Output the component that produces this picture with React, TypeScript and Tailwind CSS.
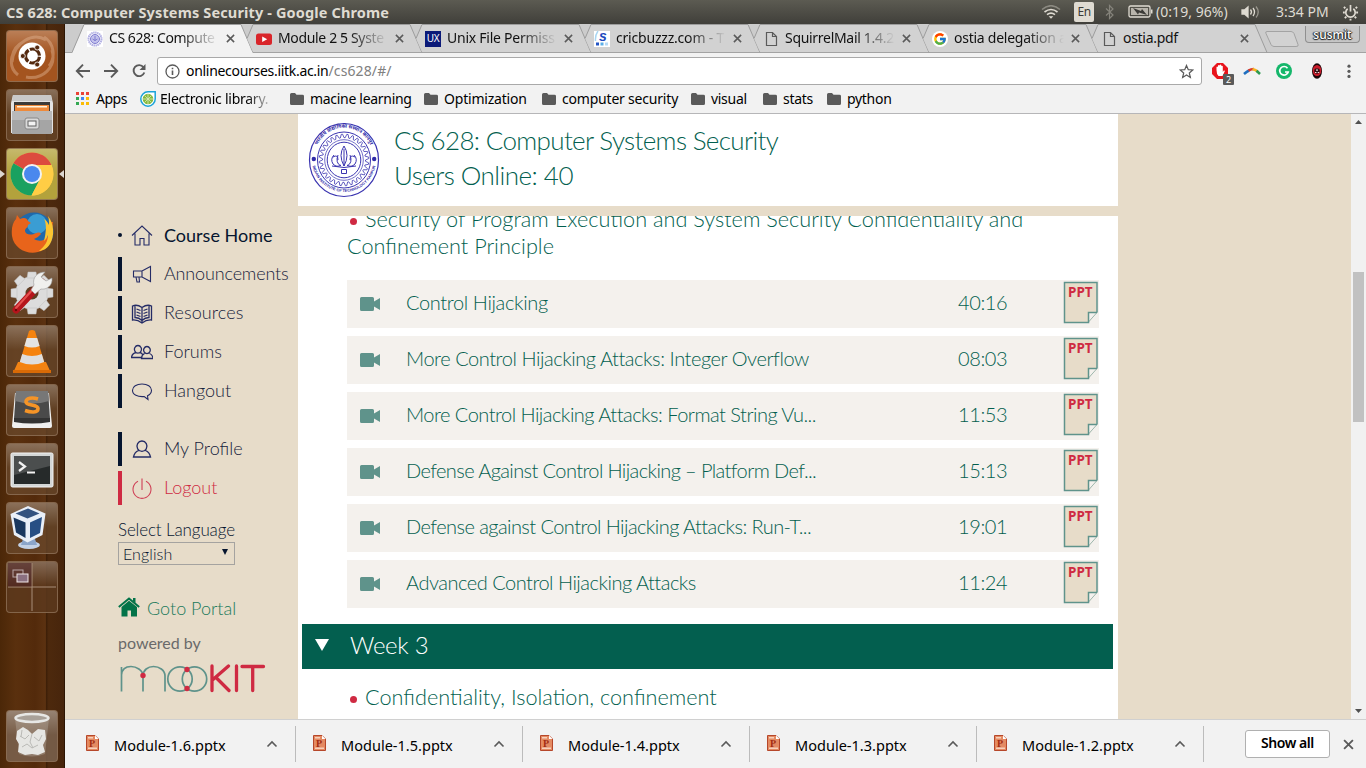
import React from "react";
import { FcGoogle } from "react-icons/fc";

const Tile = ({ children, bg = "bg-[#6b4a2e]/70" }: { children: React.ReactNode; bg?: string }) => (
  <div className={`relative flex h-[52px] w-[52px] shrink-0 items-center justify-center overflow-hidden rounded-[4px] border border-[#8d7058]/80 ${bg}`}>
    <div className="absolute inset-x-0 top-0 h-6 bg-gradient-to-b from-white/25 to-transparent" />
    <svg viewBox="0 0 48 48" className="relative h-12 w-12">{children}</svg>
  </div>
);

const Launcher = () => (
  <aside className="relative flex w-[65px] shrink-0 flex-col items-start gap-[7px] border-r border-[#2c1503] bg-[linear-gradient(90deg,#4b2708_0%,#5a300e_25%,#532a0b_55%,#5c3211_71%,#3c1e07_72%,#4d290d_76%,#47250c_100%)] pl-[6px] pt-[6px]">
    <Tile bg="bg-[#a4541f]">
      <g fill="none" stroke="#e0b493" strokeWidth="3" opacity=".45">
        <path d="M4 30C6 10 25 0 38 8M44 18c5 18-10 30-26 27M10 43C-2 34 4 15 15 10M36 5c10 6 12 20 5 29" />
      </g>
      <circle cx="24" cy="24" r="13.500" fill="#fff" />
      <circle cx="24.500" cy="24" r="7" fill="none" stroke="#54290f" strokeWidth="3.200" strokeDasharray="13.200 1.460" strokeDashoffset="-.8" />
      <g fill="#54290f" stroke="#fff" strokeWidth=".8">
        <circle cx="14.800" cy="24" r="2.500" /><circle cx="29.200" cy="15.500" r="2.500" /><circle cx="29.200" cy="32.500" r="2.500" />
      </g>
    </Tile>
    <Tile>
      <path d="M5 4h38l2 8v30H3V12z" fill="#e3e3e3" />
      <path d="M5 4h38l1 6H4z" fill="#c9c9c9" />
      <path d="M6 11h36v9H6z" fill="#3c3a38" />
      <path d="M7 14h34v6H7z" fill="#ee8a3b" /><path d="M9 15h30v1.500H9z" fill="#fff3dc" />
      <path d="M4 20h40v23H4z" fill="#a5a5a5" /><path d="M4 20h40v9H4z" fill="#b9b9b9" />
      <rect x="17" y="27" width="14" height="11" rx="2" fill="#d9d9d9" stroke="#888" />
      <rect x="20" y="30" width="8" height="5" fill="#f3f3f3" stroke="#606060" />
    </Tile>
    <Tile bg="bg-[#b3a23c]">
      <circle cx="24" cy="24" r="21.500" fill="#ffcd45" />
      <path d="M24 24 5.400 13.200A21.500 21.500 0 0 1 42.600 13.200L43.200 15H24z" fill="#dc4b3e" />
      <path d="M24 24 5.400 13.200A21.500 21.500 0 0 0 23.500 45.500L33 28z" fill="#1aa160" />
      <path d="M24 15h19.300A21.500 21.500 0 0 1 23.500 45.500L32 29z" fill="#ffcd45" />
      <circle cx="24" cy="24" r="10" fill="#f2f2f2" /><circle cx="24" cy="24" r="8" fill="#4a88ee" />
    </Tile>
    <Tile>
      <circle cx="26" cy="23" r="19.500" fill="#1f69ab" />
      <circle cx="29" cy="15" r="10" fill="#46b4e4" opacity=".7" />
      <path d="M42 13c5 10 2 23-7 28-12 7-29 0-31-14C3 19 5 13 8 10l1-4 3 4c4-2 7-1 8 2l3 2-3 2c0 3-3 3-3 6 1 4 5 4 9 3 4-2 6-2 7 0-2 2-4 4-7 5 8 5 18-1 19-17z" fill="#e8641b" />
      <path d="M40 7c6 7 7 20 2 28-3 5-8 7-11 7 6-5 9-10 9-16-1 3-2 4-4 6 2-8 3-17 0-22 3 2 4 4 5 6 0-3 0-6-1-9z" fill="#fbc531" />
    </Tile>
    <Tile>
      <g fill="#dcdcdc" stroke="#bdbdbd" strokeWidth=".5">
        <circle cx="24" cy="25" r="16.500" />
        {[0, 45, 90, 135, 180, 225, 270, 315].map((a) => (
          <path key={a} d="M20 4h8l1 6H19z" transform={`rotate(${a} 24 25)`} />
        ))}
      </g>
      <circle cx="24" cy="25" r="6.500" fill="#5f3d22" />
      <path d="M8 42 34 14" stroke="#b5151c" strokeWidth="7" strokeLinecap="round" />
      <path d="M8 40 27 19" stroke="#e4514f" strokeWidth="2" strokeLinecap="round" />
      <path d="M26 17c-2-7 3-13 11-13l-4 5 5 4 6-3c1 8-6 12-11 11l-6 5-4-4z" fill="#f0f0ee" stroke="#9a9a9a" strokeWidth=".6" />
      <circle cx="8" cy="42" r="1.200" fill="#6d0b0b" />
    </Tile>
    <Tile>
      <path d="M10 35h28l5 11H5z" fill="#f28314" /><path d="M5 43h38v3H5z" fill="#d96a06" />
      <path d="M21 4q3-2 6 0l10 34q-13 6-26 0z" fill="#f5830f" />
      <path d="M18.800 11h10.400l2.400 8q-7.600 3-15.200 0z" fill="#e4e4e4" />
      <path d="M14.200 27q9.800 4 19.600 0l2.400 8q-12 5-24.400 0z" fill="#dedede" />
    </Tile>
    <Tile>
      <path d="M7 7h34l3 33q0 2-2 2H6q-2 0-2-2z" fill="#f0f0f0" />
      <path d="M8 5h32l2 28H6z" fill="#4a4a4a" /><path d="M6 32h36v4q-18 3-36 0z" fill="#333" />
      <path d="M8 5h32l1 10q-16 5-34 0z" fill="#777" />
      <path d="M30 13c-6-2-12-1-12 3s12 2 12 6.500-7 4-13 2" fill="none" stroke="#f59427" strokeWidth="3.600" />
    </Tile>
    <Tile>
      <rect x="3" y="8" width="42" height="34" rx="1.500" fill="#d3d6d6" stroke="#f3f3f3" />
      <rect x="6" y="11" width="36" height="28" fill="#262a2a" />
      <path d="M6 11h36v10L6 30z" fill="#4b4e4e" />
      <path d="m11 17 6 4.500-6 4.500M19 27.500h8" fill="none" stroke="#f2f2f2" strokeWidth="2.200" />
    </Tile>
    <Tile>
      <ellipse cx="21" cy="41" rx="11" ry="4" fill="#c3d1e6" /><path d="M15 35h12l2 6H13z" fill="#8ba5ca" />
      <path d="M20 2 37.500 9.500 34.500 31 19.500 38.500 6 31 2.500 10z" fill="#e9eff8" />
      <path d="m20 4.500 11.500 5-12 5-12-5z" fill="#33527f" />
      <path d="m5.500 13.500 12 5v15.500L8 28.500z" fill="#19375f" /><path d="m22 18.500 12-5.500-2 16-10 5z" fill="#284f84" />
    </Tile>
    <Tile bg="bg-[#5d3a1e]/80">
      <path d="M0 24h48M24 0v48" stroke="#a88d78" />
      <path d="M0 0h23.500v23.500H0z" fill="#4a1d26" opacity=".5" />
      <rect x="5" y="7" width="10" height="7" fill="none" stroke="#b9a6a6" />
      <rect x="9" y="11" width="11" height="8" fill="#8b7080" stroke="#efe6e6" />
    </Tile>
    <div className="mt-auto mb-[6px]">
      <Tile bg="bg-[#7e6654]/80">
        <path d="M7 6h34l-4 36q-13 5-26 0z" fill="#c9c2bb" opacity=".3" />
        <path d="m9 19 6-4 5 3 4 4 6-5 7 1 1 9-3 6 2 7-7 3-6-1-7 1-7-3 1-8-3-5z" fill="#e6e6e3" />
        <path d="m12 24 5 3 4-4m5 2 5 4 3-6m-20 12 5-3 5 4 6-3M24 22l-2 8 3 6M14 18l-1 7" stroke="#babab6" fill="none" />
        <ellipse cx="24" cy="6" rx="16.500" ry="4" fill="#a9a199" stroke="#e7e7e5" strokeWidth="2.500" />
      </Tile>
    </div>
    <svg viewBox="0 0 5 8" className="absolute left-0 top-[146px] h-2 w-[5px]"><path d="M0 0l5 4-5 4z" fill="#dcd6d0" /></svg>
    <svg viewBox="0 0 5 8" className="absolute right-0 top-[146px] h-2 w-[5px]"><path d="M5 0L0 4l5 4z" fill="#dcd6d0" /></svg>
  </aside>
);

const PageIcon = () => (
  <svg viewBox="0 0 16 16" className="h-4 w-4"><path d="M3.500 1.500h6l4 4v9h-10zM9.500 1.500v4h4" fill="none" stroke="#5a5a5a" strokeWidth="1.200" /></svg>
);

const Seal = ({ className }: { className: string }) => {
  let gear = "";
  for (let i = 0; i <= 112; i++) {
    const r = i % 4 < 2 ? 21.5 : 24.8;
    const a = (i / 112) * Math.PI * 2;
    gear += `${i ? "L" : "M"}${(36 + r * Math.cos(a)).toFixed(2)} ${(38 + r * 1.04 * Math.sin(a)).toFixed(2)}`;
  }
  return (
    <svg viewBox="0 0 72 76" className={className} fill="none" stroke="#3a34b0">
      <ellipse cx="36" cy="38" rx="34.500" ry="36.500" strokeWidth="1.200" />
      <ellipse cx="36" cy="38" rx="26.500" ry="28" strokeWidth="1" />
      <path d={gear} strokeWidth=".8" />
      <ellipse cx="36" cy="38" rx="19.300" ry="20.300" strokeWidth=".7" />
      <ellipse cx="36" cy="38" rx="16.800" ry="17.800" strokeWidth="1" />
      <path d="M36 24q-6 9 0 20 6-11 0-20zM36 27v17M30 33q-3 8 3 11M42 33q3 8-3 11M26 33q-4 4-1 9 4 4 8 1M46 33q4 4 1 9-4 4-8 1M25 35q5-3 5 3M47 35q-5-3-5 3M24 44q12 3 24 0M33.500 47.500h5v4h-5z" strokeWidth="1" />
      <circle cx="5.800" cy="37" r="2.200" fill="#312ba8" stroke="none" /><circle cx="66.200" cy="37" r="2.200" fill="#312ba8" stroke="none" />
      <path id="sealTop" d="M8 27A29.500 31 0 0 1 64 27" stroke="none" />
      <path id="sealLow" d="M4.500 44A32.500 34.500 0 0 0 67.500 44" stroke="none" />
      <g fill="#312ba8" stroke="none" textAnchor="middle">
        <text fontSize="5" fontWeight="bold" fontFamily="'Noto Sans', sans-serif"><textPath href="#sealTop" startOffset="50%">भारतीय प्रौद्योगिकी संस्थान कानपुर</textPath></text>
        <text fontSize="3.900" fontWeight="bold" fontFamily="'Liberation Sans', sans-serif"><textPath href="#sealLow" startOffset="50%">INDIAN INSTITUTE OF TECHNOLOGY KANPUR</textPath></text>
      </g>
    </svg>
  );
};

const SealFavicon = () => (
  <svg viewBox="0 0 16 16" className="h-4 w-4"><rect width="16" height="16" fill="#fff" /><g fill="none" stroke="#7f7bd0"><circle cx="8" cy="8" r="6.500" strokeWidth="2" strokeDasharray="1.500 .5" opacity=".6" /><circle cx="8" cy="8" r="4.500" fill="#c3c2ec" /><path d="M8 5v5M5.500 8q2.500 3 5 0" /></g></svg>
);
const YtFavicon = () => (
  <svg viewBox="0 0 16 16" className="h-4 w-4"><rect y="2.500" width="16" height="11.500" rx="2.500" fill="#d9252a" /><path d="M6.200 5.500v5.500l5-2.750z" fill="#fff" /></svg>
);
const UxFavicon = () => (
  <span className="flex h-4 w-4 items-center justify-center bg-[#0b1a78] text-[10px] tracking-[-0.3px] text-white">UX</span>
);
const SFavicon = () => (
  <svg viewBox="0 0 16 16" className="h-4 w-4"><rect width="16" height="16" fill="#fff" /><path d="M4 0Q1 4 1.500 10" stroke="#a9d6f2" strokeWidth="1.500" fill="none" /><text x="5" y="9.500" fontSize="14" fontWeight="bold" fontStyle="italic" fill="#1c49bd" fontFamily="'Liberation Sans', sans-serif">s</text><path d="M2 11.500h3v3H2z" fill="#2354c4" /><path d="M6.500 11.500h3v3h-3z" fill="#5aaee8" /><path d="M11 11.500h3v3h-3z" fill="#b5d9f5" /></svg>
);

const TABS: { title: string; icon: React.ReactNode; text: string }[] = [
  { title: "CS 628: Compute", icon: <SealFavicon />, text: "tracking-[-0.45px]" },
  { title: "Module 2 5 Syste", icon: <YtFavicon />, text: "tracking-[-0.35px]" },
  { title: "Unix File Permiss", icon: <UxFavicon />, text: "tracking-[-0.25px]" },
  { title: "cricbuzzz.com - T", icon: <SFavicon />, text: "tracking-[-0.2px]" },
  { title: "SquirrelMail 1.4.2", icon: <PageIcon />, text: "tracking-[-0.3px]" },
  { title: "ostia delegation a", icon: <span className="flex h-4 w-4 items-center justify-center rounded-full bg-white"><FcGoogle className="h-[14px] w-[14px]" /></span>, text: "tracking-[-0.25px]" },
  { title: "ostia.pdf", icon: <PageIcon />, text: "tracking-[-0.3px]" },
];

const Close = ({ className }: { className: string }) => (
  <svg viewBox="0 0 10 10" className={className}><path d="M1 1l8 8M9 1L1 9" stroke="#5a5a5a" strokeWidth="1.700" /></svg>
);

const TabStrip = () => (
  <div className="relative flex h-[29px] shrink-0 bg-[#cccccc] pl-[7px]">
    <div className="absolute inset-x-0 bottom-0 h-px bg-[#a3a3a3]" />
    {TABS.map((t, i) => (
      <div key={t.title} className="relative flex h-[29px] w-[169px] shrink-0 items-center pl-[15px]">
        <svg viewBox="0 0 182 29" className="absolute left-0 top-0 h-[29px] w-[182px]">
          {i === 0 ? (
            <>
              <path d="M0 29L12 .5H169L181 29z" fill="#f2f2f2" />
              <path d="M0 28.500L12 .5H169L181 28.500" fill="none" stroke="#9c9c9c" />
            </>
          ) : (
            <>
              <path d="M6 14.500L12 .5H169L181 28H12z" fill="#d2d2d2" />
              <path d="M6 14.500L12 .5H169L181 28.500" fill="none" stroke="#9c9c9c" />
            </>
          )}
        </svg>
        <span className="relative flex">{t.icon}</span>
        <span className={`relative -top-px ml-[6px] w-[110px] overflow-hidden whitespace-nowrap text-[14px] leading-5 text-[#111] ${t.text} ${t.title === "ostia.pdf" ? "" : "[mask-image:linear-gradient(90deg,#000_65%,transparent_100%)]"}`}>{t.title}</span>
        <Close className="relative ml-[7px] h-[9px] w-[9px] shrink-0" />
      </div>
    ))}
    <svg viewBox="0 0 36 19" className="ml-[9px] mt-[6px] h-[19px] w-9 self-start"><path d="M3 1.500h24q2 0 3 2l4 11q1 2-2 2H10q-2 0-3-2L2 3.500q-1-2 1-2z" fill="#d2d2d2" stroke="#a3a3a3" /></svg>
    <div className="absolute right-1.5 top-0.5 flex h-[17px] w-[55px] items-center justify-center rounded-b-[4px] border border-t-0 border-[#8f8f8f] bg-[#c6c6c6] pt-px text-[12px] font-medium leading-none text-white [text-shadow:0_0_1px_#222,1px_0_1px_#222,-1px_0_1px_#222,0_1px_1px_#222]">susmit</div>
  </div>
);

const Toolbar = () => (
  <div className="flex h-[33px] shrink-0 items-center bg-[#f2f2f2] pl-[10px] pt-[3px]">
    <svg viewBox="0 0 74 18" className="h-[18px] w-[74px]" fill="none" stroke="#5a5a5a" strokeWidth="1.900">
      <path d="M15 9H2M8 2.700L1.800 9 8 15.300M29 9h13M36 2.700L42.200 9 36 15.300" />
      <path d="M68.500 5.300A5.500 5.500 0 1 0 69.300 10.500" /><path d="M70.500 2v6h-6z" fill="#5a5a5a" stroke="none" />
    </svg>
    <div className="ml-[8px] flex h-[28px] w-[1045px] items-center rounded-[3px] border border-[#a9a9a9] bg-white px-[7px]">
      <svg viewBox="0 0 15 15" className="h-[15px] w-[15px]"><circle cx="7.500" cy="7.500" r="6.500" fill="none" stroke="#5a5a5a" strokeWidth="1.300" /><path d="M7.500 6.500v4.500M7.500 3.800v1.500" stroke="#5a5a5a" strokeWidth="1.600" /></svg>
      <span className="ml-[6px] text-[14px] leading-none tracking-[-0.3px] text-black">onlinecourses.iitk.ac.in<span className="tracking-[0.12px] text-[#808080]">/cs628/#/</span></span>
      <svg viewBox="0 0 16 16" className="ml-auto h-[15px] w-[15px]"><path d="M8 1.500l1.900 4.500 4.800.4-3.700 3.200 1.100 4.800L8 11.800l-4.100 2.600L5 9.600 1.300 6.400 6.100 6z" fill="none" stroke="#5a5a5a" strokeWidth="1.300" /></svg>
    </div>
    <div className="relative ml-[10px] h-4 w-[22px]">
      <svg viewBox="0 0 16 16" className="h-4 w-4"><path d="M5 0h6l5 5v6l-5 5H5l-5-5V5z" fill="#e8141c" /><path d="M4.500 7V4q.8-1 1.500 0V2.500q.9-1 1.700 0V2q.8-1 1.600 0v1q.9-.8 1.500.2V9l1-1.500q1.200-.3 1 .8L10.500 13h-4Q4.500 11 4.500 7z" fill="#fff" /></svg>
      <span className="absolute left-[11px] top-[11px] flex h-[11px] w-[11px] items-center justify-center rounded-[1px] bg-[#5a5a5a] text-[9px] leading-none text-white">2</span>
    </div>
    <svg viewBox="0 0 18 8" className="ml-[9px] h-2 w-[18px]" fill="none" strokeWidth="2.600"><path d="M1 7Q4 4.500 6 3.500" stroke="#1f6fc0" /><path d="M5.500 3.700Q8 2 11 2" stroke="#d83a2b" /><path d="M9.500 2Q13 3 14.500 4.500" stroke="#f5b324" /><path d="M13.500 3.800L17 7" stroke="#2d9a50" /></svg>
    <svg viewBox="0 0 16 16" className="ml-[15px] h-4 w-4"><circle cx="8" cy="8" r="8" fill="#15b76b" /><path d="M11.500 5.200A4.300 4.300 0 1 0 12.200 9H9" fill="none" stroke="#fff" strokeWidth="1.700" /></svg>
    <svg viewBox="0 0 12 16" className="ml-[19px] h-4 w-3"><ellipse cx="6" cy="8" rx="5" ry="7.800" fill="#1a0709" /><ellipse cx="6" cy="7.500" rx="4.300" ry="5.500" fill="#cb1c2b" /><circle cx="6" cy="8" r="2.800" fill="#2c0f13" /><path d="M6 5.500l1 2-1 .5-1-.5zM4 9h1.500v1H4zM6.700 9h1.500v1H6.700z" fill="#f2dada" /></svg>
    <svg viewBox="0 0 4 16" className="ml-[24px] h-4 w-1" fill="#5a5a5a"><circle cx="2" cy="3.200" r="1.600" /><circle cx="2" cy="8.300" r="1.600" /><circle cx="2" cy="13.400" r="1.600" /></svg>
  </div>
);

const Folder = ({ label, className }: { label: string; className: string }) => (
  <div className={`flex shrink-0 items-center gap-[6px] ${className}`}>
    <svg viewBox="0 0 14 12" className="h-3 w-[14px] shrink-0"><path d="M1.500 0H5l1.500 1.800h6q1.500 0 1.500 1.400v7.300q0 1.500-1.500 1.500h-11Q0 12 0 10.500v-9Q0 0 1.500 0z" fill="#5a5a5a" /></svg>
    <span>{label}</span>
  </div>
);

const Bookmarks = () => (
  <div className="flex h-7 shrink-0 items-center whitespace-nowrap border-b border-[#b6b6b8] bg-[#f2f2f2] pb-[2px] pl-[11px] text-[14px] leading-none tracking-[-0.3px] text-black">
    <div className="grid h-[13px] w-[13px] grid-cols-3 gap-[2px]">
      <i className="bg-[#ea4335]" /><i className="bg-[#ea4335]" /><i className="bg-[#ea4335]" />
      <i className="bg-[#34a853]" /><i className="bg-[#4285f4]" /><i className="bg-[#fbbc05]" />
      <i className="bg-[#34a853]" /><i className="bg-[#fbbc05]" /><i className="bg-[#fbbc05]" />
    </div>
    <span className="ml-[7px] w-[44px] shrink-0 tracking-[-0.5px]">Apps</span>
    <svg viewBox="0 0 16 16" className="h-4 w-4 shrink-0"><path d="M8 .8h7.200V8A7.200 7.200 0 1 1 8 .8z" fill="#fff" stroke="#1ba3d8" strokeWidth="1.500" /><circle cx="8" cy="8" r="5.300" fill="#85b83c" /><path d="M8 3v10M3 8h10M4.500 4.500l7 7M11.500 4.500l-7 7" stroke="#dcebb9" strokeWidth=".8" /></svg>
    <span className="ml-[4px] w-[115px] shrink-0 leading-5 tracking-[-0.25px] [mask-image:linear-gradient(90deg,#000_75%,transparent_100%)]">Electronic library.</span>
    <Folder label="macine learning" className="ml-[15px] w-[134px]" />
    <Folder label="Optimization" className="w-[118px] tracking-[-0.2px]" />
    <Folder label="computer security" className="w-[149px] tracking-[-0.2px]" />
    <Folder label="visual" className="w-[72px]" />
    <Folder label="stats" className="w-[64px]" />
    <Folder label="python" className="" />
  </div>
);

const navIcons: Record<string, React.ReactNode> = {
  home: <path d="M1 11.500L11 2l10 9.500M4 9.500V21h5v-6.500h4V21h5V9.500" />,
  horn: <path d="M2.500 8H11l8.500-4.500v15L11 14H2.500zM11 8v6M5 14l1 5h2.500L8 14" />,
  book: <path d="M11 5.500Q6 2 1.500 4v14q5-.5 9.500 3 4.500-3.500 9.500-3V4Q16 2 11 5.500zM11 5.500V21M4 4v11.500q4 0 7 3 3-3 7-3V4M5.500 7l4 1.500M5.500 10l4 1.500M5.500 13l4 1.500M16.500 7l-4 1.500M16.500 10l-4 1.500M16.500 13l-4 1.500" strokeWidth="1.300" />,
  forum: <path d="M7 4.500a3.500 3.800 0 1 1-.1 0zM16 5.500a3.300 3.600 0 1 1-.1 0zM5 11.500q-4 1-4.500 5h10.500M9 11.500q2 .5 2.500 2M13.500 12.500q-3 1.500-3 5h11.500q-.5-4-3.500-5" strokeWidth="1.300" />,
  chat: <path d="M11 4c5.500 0 9.500 2.600 9.500 6.300 0 2.500-1.700 4.500-4 5.500l.5 3.700-3.800-3C6.600 17 1.500 15 1.500 10.300 1.500 6.600 5.500 4 11 4z" />,
  user: <path d="M11 3a5 5.200 0 1 1-.1 0zM7.500 12.500q-4 1.500-5 6.500h17q-1-5-5-6.500" strokeWidth="1.300" />,
  power: <path d="M11 1.500v11.500M7 4.300a9 9 0 1 0 8 0" />,
};

const NavItem = ({ icon, label, active, red, text = "" }: { icon: string; label: string; active?: boolean; red?: boolean; text?: string }) => (
  <div className="flex h-[34px] items-center">
    {active ? <span className="h-1 w-1 rounded-full bg-[#06152f]" /> : <span className={`h-full w-1 ${red ? "bg-[#cf2a42]" : "bg-[#06152f]"}`} />}
    <svg viewBox="0 0 22 22" strokeWidth="1.100" className={`ml-[9px] h-[22px] w-[22px] fill-none ${red ? "stroke-[#cf3f55]" : "stroke-[#252c66]"}`}>{navIcons[icon]}</svg>
    <span className={`ml-[11px] text-[18px] leading-none ${text} ${active ? "font-normal text-[#06152f]" : red ? "pb-0.5 font-light text-[#cf2a42]" : "pb-0.5 font-light text-[#16223c]"}`}>{label}</span>
  </div>
);

const Sidebar = () => (
  <nav className="flex w-[233px] shrink-0 flex-col pl-[53px] pt-[104px] font-['Lato',sans-serif]">
    <NavItem icon="home" label="Course Home" active />
    <div className="mt-[5px] flex flex-col gap-[5px]">
      <NavItem icon="horn" label="Announcements" text="tracking-[-0.15px]" />
      <NavItem icon="book" label="Resources" text="tracking-[0.1px]" />
      <NavItem icon="forum" label="Forums" />
      <NavItem icon="chat" label="Hangout" />
    </div>
    <div className="mt-[24px] flex flex-col gap-[5px]">
      <NavItem icon="user" label="My Profile" />
      <NavItem icon="power" label="Logout" red />
    </div>
    <div className="mt-[16px] text-[17px] font-light leading-[18px] tracking-[-0.13px] text-[#06152f]">Select Language</div>
    <div className="mt-[3px] flex h-[23px] w-[117px] items-center justify-between border border-[#a5a3a0] pl-1 pr-1.5 text-[16px] font-light tracking-[0.1px] text-[#06152f]">
      English
      <svg viewBox="0 0 6 6" className="mb-1 h-1.5 w-1.5"><path d="M0 0h6L3 6z" fill="#06152f" /></svg>
    </div>
    <div className="mt-[31px] flex h-[22px] items-center">
      <svg viewBox="0 0 22 20" className="h-5 w-[22px]"><path d="M11 3.800L3.500 10v9.500h6v-6h3.500v6h6V10z" fill="#037348" /><path d="M.8 10L11 1.500 21.200 10" fill="none" stroke="#037348" strokeWidth="2" /><path d="M15 1h2.500v5L15 4z" fill="#037348" /></svg>
      <span className="ml-[7px] pt-0.5 text-[18px] font-light leading-none text-[#1b7a5b]">Goto Portal</span>
    </div>
    <div className="mt-[15px] text-[16px] leading-5 text-[#6a6a6a]">powered by</div>
    <svg viewBox="0 0 148 32" className="mt-[9px] h-8 w-[148px]" fill="none" strokeWidth="1.700">
      <g stroke="#5f938b">
        <path d="M3.500 29.500V5M3.500 13C4 7 8 4.500 13 4.500S25 8 25 14v15.500M25 14C25 8 30 4.500 35.500 4.500S47 8 47 14v15.500" />
        <circle cx="62" cy="17" r="12.200" /><circle cx="76.500" cy="17" r="12.200" />
      </g>
      <g fill="#cf2a42" stroke="none"><circle cx="25" cy="13.500" r="2.700" /><circle cx="69" cy="7.500" r="2.700" /><circle cx="69" cy="26.500" r="2.700" /></g>
      <path d="M94 4v24.500M110.500 4L95 17.500M98 15.500l13 13M118.500 4v24.500M124 4.500H145.500M134.700 4.500v24" stroke="#cf2a42" strokeWidth="3.300" strokeLinecap="round" />
    </svg>
  </nav>
);

const LESSONS = [
  { title: "Control Hijacking", time: "40:16", text: "tracking-[-0.36px]" },
  { title: "More Control Hijacking Attacks: Integer Overflow", time: "08:03", text: "tracking-[-0.44px]" },
  { title: "More Control Hijacking Attacks: Format String Vu...", time: "11:53", text: "tracking-[-0.51px]" },
  { title: "Defense Against Control Hijacking – Platform Def...", time: "15:13", text: "tracking-[-0.6px]" },
  { title: "Defense against Control Hijacking Attacks: Run-T...", time: "19:01", text: "tracking-[-0.56px]" },
  { title: "Advanced Control Hijacking Attacks", time: "11:24", text: "tracking-[-0.49px]" },
];

const Lesson = ({ title, time, text }: { title: string; time: string; text: string }) => (
  <div className="flex h-12 items-center bg-[#f4f1ed] pl-[13px] text-[20px] font-light leading-none text-[#035f4f]">
    <svg viewBox="0 0 20 14" className="h-[14px] w-5 shrink-0"><path d="M1.500 0h11Q14 0 14 1.500v3L20 1v12l-6-3.500v3q0 1.500-1.500 1.500h-11Q0 14 0 12.500v-11Q0 0 1.500 0z" fill="#5f938b" /></svg>
    <span className={`ml-[26px] w-[552px] whitespace-nowrap pb-1 ${text}`}>{title}</span>
    <span className="w-[105px] pb-1 tracking-[-0.4px]">{time}</span>
    <svg viewBox="0 0 36 43" className="-mt-[4px] h-[43px] w-9 shrink-0">
      <path d="M1.500 1.500h32v30l-8 10h-24z" fill="#e7dcc9" />
      <path d="M25.500 41L34 31.500h-8.500z" fill="#f4f1ed" stroke="#9fb8ae" />
      <path d="M34 31.500V1.500H1.500v40h24V31.500H34" fill="none" stroke="#5f938b" strokeWidth="1.500" />
      <text x="5" y="15.500" fontSize="13.500" fontWeight="bold" fill="#cf2a42" fontFamily="'Noto Sans', sans-serif">PPT</text>
    </svg>
  </div>
);

const Course = () => (
  <main className="flex w-[820px] shrink-0 flex-col font-['Lato',sans-serif] text-[#035f4f]">
    <header className="flex h-[92px] shrink-0 items-start bg-white pl-[10px] pt-[8px]">
      <Seal className="h-[76px] w-[72px]" />
      <div className="ml-[14px] mt-[1px] text-[26px] font-light leading-[35px]">
        <div className="tracking-[-0.66px]">CS 628: Computer Systems Security</div>
        <div className="tracking-[-0.53px]">Users Online: 40</div>
      </div>
    </header>
    <section className="mt-[10px] flex min-h-0 flex-1 flex-col overflow-hidden bg-white">
      <div className="-mt-[10px] ml-[49px] w-[752px] shrink-0 text-[21.7px] font-light leading-[27px]">
        <span className="mr-[8px] inline-block h-[7px] w-[7px] translate-x-[3px] -translate-y-[2px] rounded-full bg-[#cf2a42]" /><span className="ml-[3px]">Security of Program Execution and System Security Confidentiality and Confinement Principle</span>
      </div>
      <div className="ml-[49px] mt-[20px] flex w-[752px] shrink-0 flex-col gap-2">
        {LESSONS.map((l) => <Lesson key={l.title} {...l} />)}
      </div>
      <div className="ml-1 mt-4 flex h-[45px] w-[811px] shrink-0 items-center bg-[#035f4f] pl-[13px] text-[24px] font-light text-white">
        <svg viewBox="0 0 14 12" className="mb-1 h-3 w-[14px]"><path d="M0 0h14L7 12z" fill="#fff" /></svg>
        <span className="ml-[21px] pb-1 tracking-[-0.3px]">Week 3</span>
      </div>
      <div className="ml-[52px] mt-[15px] flex shrink-0 items-center whitespace-nowrap text-[21.7px] font-light leading-[27px]">
        <span className="mr-[8px] mt-[3px] h-[7px] w-[7px] rounded-full bg-[#cf2a42]" />Confidentiality, Isolation, confinement
      </div>
    </section>
  </main>
);

const Downloads = () => (
  <footer className="flex h-[49px] shrink-0 items-center border-t border-[#d0d0d0] bg-[#f2f2f2]">
    {["1.6", "1.5", "1.4", "1.3", "1.2"].map((n, i) => (
      <div key={n} className={`flex h-9 shrink-0 items-center border-r border-[#bcbcbc] ${i ? "w-[227px] pl-[17px]" : "w-[231px] pl-[21px]"}`}>
        <svg viewBox="0 0 13 16" className="mb-[3px] h-4 w-[13px]"><path d="M.5.5H9l3.500 3.500v11.500H.5z" fill="#e48a62" stroke="#b6472a" /><path d="M9 .5V4h3.500z" fill="#fff" /><path d="M2 2h5v1.500H2zM2 12.500h9V14H2z" fill="#f7d0bb" /><text x="3" y="11.500" fontSize="10" fontWeight="bold" fill="#a32d12" fontFamily="'Liberation Serif', serif">P</text></svg>
        <span className="ml-[15px] mt-[3px] w-[152px] text-[14.5px] leading-none tracking-[0.02px] text-black">Module-{n}.pptx</span>
        <svg viewBox="0 0 12 8" className="mb-px h-2 w-3"><path d="M1.500 6.500L6 2l4.500 4.500" fill="none" stroke="#5a5a5a" strokeWidth="1.600" /></svg>
      </div>
    ))}
    <div className="ml-[41px] flex h-7 w-[85px] items-center justify-center rounded-[3px] border border-[#b0b0b0] bg-white pb-[3px] text-[14px] font-semibold tracking-[-0.45px] text-black">Show all</div>
    <Close className="ml-[13px] h-[11px] w-[11px]" />
  </footer>
);

const TopBar = () => (
  <div className="flex h-6 shrink-0 items-center whitespace-nowrap bg-gradient-to-b from-[#5c5b52] to-[#403f3a] pl-[6px] text-[14px] leading-none text-[#dfdbd2]">
    <span className="text-[14.5px] font-bold tracking-[0.14px]">CS 628: Computer Systems Security - Google Chrome</span>
    <div className="ml-auto flex w-[325px] shrink-0 items-center">
      <svg viewBox="0 0 20 14" className="h-[14px] w-5" fill="none" strokeWidth="1.600" stroke="#dfdbd2"><path d="M1 4.500Q10-3 19 4.500" opacity=".4" /><path d="M3.500 7Q10 2 16.500 7M6 9.700Q10 6.500 14 9.700" /><path d="M7.700 11.300h4.600L10 13.700z" fill="#dfdbd2" stroke="none" /></svg>
      <span className="ml-[13px] flex h-5 w-5 items-center justify-center rounded-[2px] bg-[#dfdbd2] text-[12px] tracking-[-0.5px] text-[#3c3b37]">En</span>
      <svg viewBox="0 0 10 16" className="ml-[11px] h-4 w-[10px]"><path d="M1 4.500l7 6.500-3.500 3.500v-13L8 5 1 11.500" fill="none" stroke="#85837b" strokeWidth="1.200" /></svg>
      <svg viewBox="0 0 25 14" className="ml-[13px] h-[14px] w-[25px]"><rect x="1" y="1" width="21" height="11" rx="1.500" fill="none" stroke="#dfdbd2" strokeWidth="1.300" /><path d="M3 3h17v7H3z" fill="#b8b4ab" /><path d="M23 4.500h1.500v4H23z" fill="#dfdbd2" /><path d="M5 3l8 3 1-2 5 6-8-2.500-1 2z" fill="#3c3b37" /></svg>
      <span className="ml-[3px] w-[85px] tracking-[0.05px]">(0:19, 96%)</span>
      <svg viewBox="0 0 20 14" className="h-[14px] w-5" fill="none" stroke="#dfdbd2" strokeWidth="1.300"><path d="M1 5h2.500L7 2v10L3.500 9H1z" fill="#dfdbd2" /><path d="M9.500 4.500q2 2.500 0 5M12 3q3 4 0 8" /><path d="M15 1.500q4.500 5.500 0 11" opacity=".5" /></svg>
      <span className="ml-[15px] w-[66px]">3:34 PM</span>
      <svg viewBox="0 0 18 18" className="h-[17px] w-[17px]" fill="none" stroke="#dfdbd2"><path d="M6 5a5 5 0 1 0 6 0" strokeWidth="1.800" /><path d="M9 1v7" strokeWidth="1.800" /><path d="M3.500 4.500L2 3M14.500 4.500L16 3M3 9H1M15 9h2M4.500 13.500L3 15M13.500 13.500L15 15M9 15.500V17.500" strokeWidth="2" /></svg>
    </div>
  </div>
);

const Scrollbar = () => (
  <div className="ml-auto flex w-[15px] flex-col items-center bg-[#f1f1f1] py-[6px]">
    <svg viewBox="0 0 7 4" className="h-1 w-[7px]"><path d="M0 4h7L3.500 0z" fill="#505050" /></svg>
    <div className="mt-[148px] h-[150px] w-[11px] bg-[#c1c1c1]" />
    <svg viewBox="0 0 7 4" className="mt-auto h-1 w-[7px]"><path d="M0 0h7L3.500 4z" fill="#505050" /></svg>
  </div>
);

export default function App() {
  return (
    <div className="flex h-[768px] w-[1366px] flex-col overflow-hidden bg-[#f2f2f2] font-['Noto_Sans','Open_Sans',sans-serif]">
      <TopBar />
      <div className="flex min-h-0 flex-1">
        <Launcher />
        <div className="flex min-w-0 flex-1 flex-col">
          <TabStrip />
          <Toolbar />
          <Bookmarks />
          <div className="flex min-h-0 flex-1 bg-[#e7dcc9]">
            <Sidebar />
            <Course />
            <Scrollbar />
          </div>
          <Downloads />
        </div>
      </div>
    </div>
  );
}
